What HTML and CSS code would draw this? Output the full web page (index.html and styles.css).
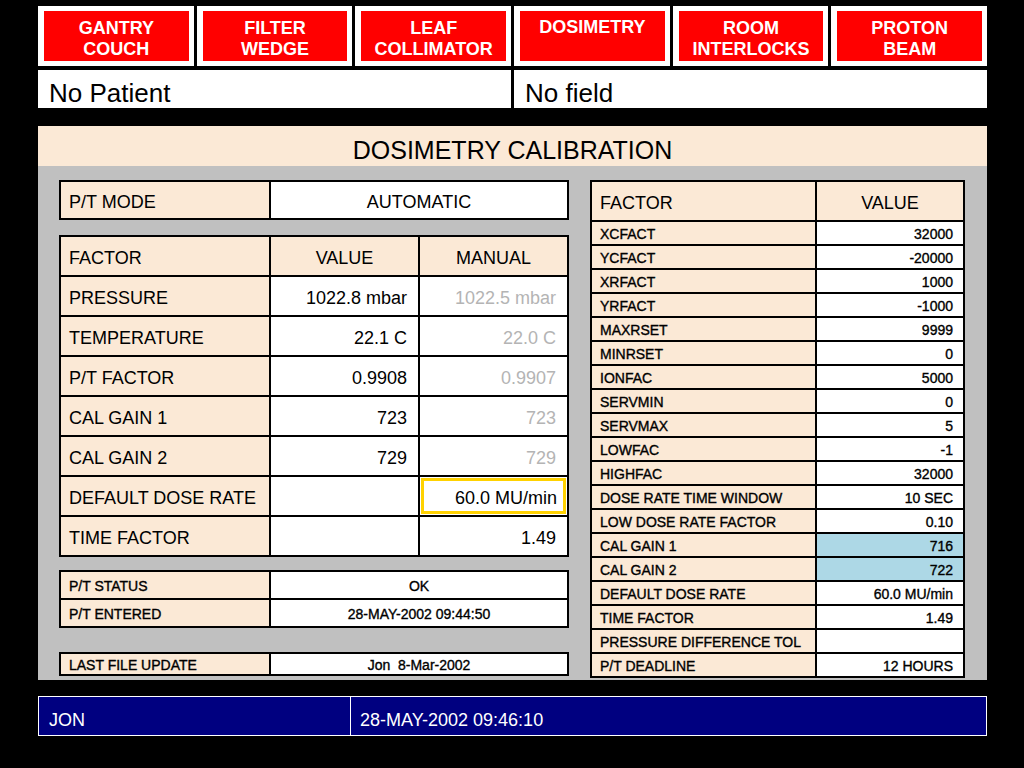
FILE: index.html
```html
<!DOCTYPE html>
<html>
<head>
<meta charset="utf-8">
<title>Dosimetry Calibration</title>
<link rel="stylesheet" href="styles.css">
</head>
<body>
<div class="screen">
  <nav class="tabs">
    <div class="tab"><span class="tab-btn">GANTRY<br>COUCH</span></div>
    <div class="tab"><span class="tab-btn">FILTER<br>WEDGE</span></div>
    <div class="tab"><span class="tab-btn">LEAF<br>COLLIMATOR</span></div>
    <div class="tab"><span class="tab-btn tab-top">DOSIMETRY</span></div>
    <div class="tab"><span class="tab-btn">ROOM<br>INTERLOCKS</span></div>
    <div class="tab"><span class="tab-btn">PROTON<br>BEAM</span></div>
  </nav>

  <div class="context">
    <div class="ctx">No Patient</div>
    <div class="ctx">No field</div>
  </div>

  <section class="panel">
    <h1 class="panel-title">DOSIMETRY CALIBRATION</h1>
    <div class="panel-body">
      <div class="left-col">
        <table class="grid big mode">
          <tr>
            <td class="lbl c1">P/T MODE</td>
            <td class="val center c23">AUTOMATIC</td>
          </tr>
        </table>

        <table class="grid big factors">
          <tr>
            <td class="lbl c1">FACTOR</td>
            <td class="lbl center c2">VALUE</td>
            <td class="lbl center c3">MANUAL</td>
          </tr>
          <tr><td class="lbl">PRESSURE</td><td class="val num">1022.8 mbar</td><td class="val num dim">1022.5 mbar</td></tr>
          <tr><td class="lbl">TEMPERATURE</td><td class="val num">22.1 C</td><td class="val num dim">22.0 C</td></tr>
          <tr><td class="lbl">P/T FACTOR</td><td class="val num">0.9908</td><td class="val num dim">0.9907</td></tr>
          <tr><td class="lbl">CAL GAIN 1</td><td class="val num">723</td><td class="val num dim">723</td></tr>
          <tr><td class="lbl">CAL GAIN 2</td><td class="val num">729</td><td class="val num dim">729</td></tr>
          <tr><td class="lbl">DEFAULT DOSE RATE</td><td class="val"></td><td class="val num focus">60.0 MU/min</td></tr>
          <tr><td class="lbl">TIME FACTOR</td><td class="val"></td><td class="val num">1.49</td></tr>
        </table>

        <table class="grid small status">
          <tr><td class="lbl c1">P/T STATUS</td><td class="val center c23">OK</td></tr>
          <tr><td class="lbl">P/T ENTERED</td><td class="val center">28-MAY-2002 09:44:50</td></tr>
        </table>

        <table class="grid small update">
          <tr><td class="lbl c1">LAST FILE UPDATE</td><td class="val center c23 pre">Jon  8-Mar-2002</td></tr>
        </table>
      </div>

      <table class="grid small params">
        <tr class="head"><td class="lbl p1">FACTOR</td><td class="lbl center p2">VALUE</td></tr>
        <tr><td class="lbl">XCFACT</td><td class="val num">32000</td></tr>
        <tr><td class="lbl">YCFACT</td><td class="val num">-20000</td></tr>
        <tr><td class="lbl">XRFACT</td><td class="val num">1000</td></tr>
        <tr><td class="lbl">YRFACT</td><td class="val num">-1000</td></tr>
        <tr><td class="lbl">MAXRSET</td><td class="val num">9999</td></tr>
        <tr><td class="lbl">MINRSET</td><td class="val num">0</td></tr>
        <tr><td class="lbl">IONFAC</td><td class="val num">5000</td></tr>
        <tr><td class="lbl">SERVMIN</td><td class="val num">0</td></tr>
        <tr><td class="lbl">SERVMAX</td><td class="val num">5</td></tr>
        <tr><td class="lbl">LOWFAC</td><td class="val num">-1</td></tr>
        <tr><td class="lbl">HIGHFAC</td><td class="val num">32000</td></tr>
        <tr><td class="lbl">DOSE RATE TIME WINDOW</td><td class="val num">10 SEC</td></tr>
        <tr><td class="lbl">LOW DOSE RATE FACTOR</td><td class="val num">0.10</td></tr>
        <tr><td class="lbl">CAL GAIN 1</td><td class="val num hl">716</td></tr>
        <tr><td class="lbl">CAL GAIN 2</td><td class="val num hl">722</td></tr>
        <tr><td class="lbl">DEFAULT DOSE RATE</td><td class="val num">60.0 MU/min</td></tr>
        <tr><td class="lbl">TIME FACTOR</td><td class="val num">1.49</td></tr>
        <tr><td class="lbl">PRESSURE DIFFERENCE TOL</td><td class="val num"></td></tr>
        <tr><td class="lbl">P/T DEADLINE</td><td class="val num">12 HOURS</td></tr>
      </table>
    </div>
  </section>

  <footer class="status-bar">
    <div class="sb-user">JON</div>
    <div class="sb-time">28-MAY-2002 09:46:10</div>
  </footer>
</div>
</body>
</html>
```

FILE: styles.css
```css
* { box-sizing: border-box; }

html, body {
  margin: 0;
  padding: 0;
  background: #000;
  font-family: "Liberation Sans", Arial, Helvetica, sans-serif;
  color: #000;
}

.screen {
  width: 949px;
  margin-left: 38px;
  padding-top: 6px;
}

/* top buttons */
.tabs {
  display: grid;
  grid-template-columns: repeat(6, 1fr);
  column-gap: 3px;
  height: 60px;
}
.tab {
  background: #fff;
  padding: 5px 5px 5px 6px;
  display: flex;
}
.tab-btn {
  flex: 1;
  background: #ff0000;
  color: #fff;
  font-weight: bold;
  font-size: 18px;
  line-height: 21px;
  text-align: center;
  display: flex;
  align-items: center;
  justify-content: center;
  padding-top: 5px;
}
.tab-btn.tab-top {
  align-items: flex-start;
  padding-top: 6px;
}

/* patient / field */
.context {
  display: grid;
  grid-template-columns: 1fr 1fr;
  column-gap: 3px;
  margin-top: 4px;
  height: 38px;
}
.ctx {
  background: #fff;
  font-size: 26px;
  line-height: 30px;
  padding: 8px 0 0 11px;
}

/* panel */
.panel {
  margin-top: 18px;
}
.panel-title {
  margin: 0;
  height: 40px;
  background: #fbe9d6;
  font-weight: normal;
  font-size: 25px;
  line-height: 32px;
  padding-top: 8px;
  text-align: center;
}
.panel-body {
  background: #c0c0c0;
  height: 514px;
  padding: 14px 22px 0 21px;
  display: flex;
  gap: 21px;
  align-items: flex-start;
}
.left-col {
  width: 510px;
  display: flex;
  flex-direction: column;
}

/* tables */
.grid {
  border-collapse: separate;
  border-spacing: 2px;
  background: #000;
  table-layout: fixed;
}
.grid td {
  padding: 0 10px 0 8px;
  vertical-align: middle;
  white-space: nowrap;
  overflow: hidden;
}
.lbl { background: #fbe9d6; }
.val { background: #fff; }
.grid td.center { text-align: center; padding-left: 0; padding-right: 0; }
.grid td.num { text-align: right; padding-right: 11px; }
.dim { color: #b4b4b4; }
.grid td.pre { white-space: pre; }
.grid td.hl { background: #add8e6; }
.grid td.focus {
  box-shadow: inset 0 0 0 1px #fff, inset 0 0 0 4px #ffd200;
  padding-right: 10px;
}

.big td {
  font-size: 18px;
  height: 38px;
}
.grid.big td { padding-top: 4px; }

.mode { width: 510px; }
.mode td { height: 36px; }
.mode .c1 { width: 208px; }
.mode .c23 { width: 296px; }

.factors { width: 510px; margin-top: 15px; }
.factors .c1 { width: 208px; }
.factors .c2 { width: 147px; }
.factors .c3 { width: 147px; }

.small td {
  font-size: 14px;
  -webkit-text-stroke: 0.35px #000;
}
.grid.small td { padding-top: 2px; }
.status { width: 510px; margin-top: 13px; }
.status td { height: 26px; }
.status .c1 { width: 208px; }
.status .c23 { width: 296px; }

.update { width: 510px; margin-top: 24px; }
.update td { height: 20px; }
.update .c1 { width: 208px; }
.update .c23 { width: 296px; }

.params { width: 375px; }
.params td { height: 22px; }
.params .p1 { width: 223px; }
.params .p2 { width: 146px; }
.params td.num { padding-right: 10px; }
.grid.params .head td {
  height: 38px;
  font-size: 18px;
  -webkit-text-stroke: 0;
  padding-top: 4px;
}

/* status bar */
.status-bar {
  margin-top: 16px;
  height: 40px;
  border: 1px solid #fff;
  background: #000080;
  color: #fff;
  display: flex;
  font-size: 18px;
}
.sb-user {
  width: 312px;
  border-right: 1px solid #fff;
  padding: 8px 0 0 10px;
  line-height: 30px;
}
.sb-time {
  flex: 1;
  padding: 8px 0 0 9px;
  line-height: 30px;
}
```
